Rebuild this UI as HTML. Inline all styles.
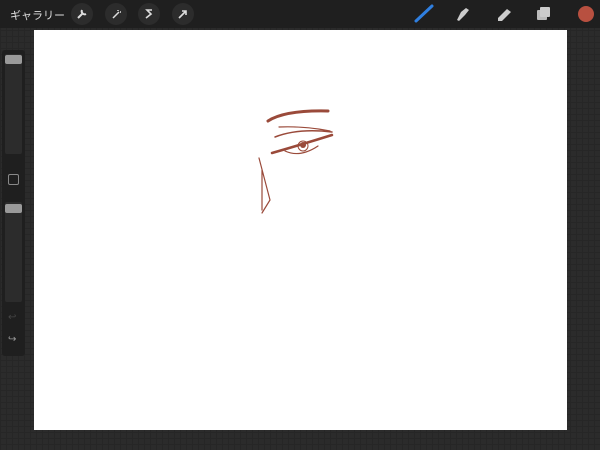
<!DOCTYPE html><html><head><style>
body{margin:0;width:600px;height:450px;overflow:hidden;background:#2b2b2b;position:relative;font-family:"Liberation Sans","Noto Sans CJK JP",sans-serif;
background-image:linear-gradient(#262626 1px,transparent 1px),linear-gradient(90deg,#262626 1px,transparent 1px);background-size:6px 6px;}
.top{position:absolute;left:0;top:0;width:600px;height:28px;background:#1f1f1f;}
.g{position:absolute;left:10px;top:7px;color:#ddd;font-size:11px;}
.ic{position:absolute;top:3px;width:22px;height:22px;border-radius:50%;background:#2c2c2c;}
.canvas{position:absolute;left:34px;top:30px;width:533px;height:400px;background:#fff;}
.side{position:absolute;left:2px;top:50px;width:23px;height:306px;background:#1f1f1f;border-radius:3px;}
.sl{position:absolute;left:3px;width:17px;background:#2c2c2c;border-radius:2px;}
.h{position:absolute;left:0;width:17px;height:9px;background:#9a9a9a;border-radius:2px;}
</style></head><body>
<div class="top"></div>
<div class="g">ギャラリー</div>
<div class="ic" style="left:71px"><svg width="22" height="22"><path d="M7 15l5-5M11 7a3 3 0 0 0 4 4" stroke="#ddd" stroke-width="2" fill="none"/></svg></div>
<div class="ic" style="left:105px"><svg width="22" height="22"><path d="M8 15l6-6M13 7v1M15 9h1" stroke="#ddd" stroke-width="1.5" fill="none"/></svg></div>
<div class="ic" style="left:138px"><svg width="22" height="22"><path d="M14 7H9l4 4-5 4" stroke="#ddd" stroke-width="1.6" fill="none"/></svg></div>
<div class="ic" style="left:172px"><svg width="22" height="22"><path d="M7 15l7-7M10 8h4v4" stroke="#ddd" stroke-width="1.6" fill="none"/></svg></div>
<svg style="position:absolute;left:410px;top:2px" width="190" height="24">
<path d="M6 19L22 4" stroke="#2f7fe0" stroke-width="3" stroke-linecap="round"/>
<path d="M47 18l4-8 5-4 3 2-4 5-6 6z" fill="#ccc"/>
<path d="M88 16l9-9 4 3-9 9h-4z" fill="#ccc"/>
<rect x="127" y="8" width="10" height="10" fill="#bbb" rx="1"/><rect x="130" y="5" width="10" height="10" fill="#ccc" rx="1"/>
<circle cx="176" cy="12" r="8" fill="#b85040"/>
</svg>
<div class="canvas"></div>
<div class="side">
<div class="sl" style="top:4px;height:100px"><div class="h" style="top:1px"></div></div>
<div style="position:absolute;left:6px;top:124px;width:9px;height:9px;border:1px solid #888;border-radius:2px"></div>
<div class="sl" style="top:152px;height:100px"><div class="h" style="top:2px"></div></div>
<div style="position:absolute;left:6px;top:262px;color:#444;font-size:10px">↩</div>
<div style="position:absolute;left:6px;top:284px;color:#999;font-size:10px">↪</div>
</div>
<svg style="position:absolute;left:0;top:0" width="600" height="450" fill="none" stroke="#9a4a3a" stroke-linecap="round">
<path d="M268 121Q285 110 328 111" stroke-width="3"/>
<path d="M279 127Q305 126 330 131" stroke-width="1.2"/>
<path d="M275 137Q298 128 332 132" stroke-width="1.5"/>
<path d="M272 153Q300 145 332 135" stroke-width="2.5"/>
<path d="M285 151Q300 158 318 146" stroke-width="1.2"/>
<circle cx="303" cy="146" r="5" stroke-width="1"/>
<circle cx="303" cy="145" r="3" fill="#9a4a3a" stroke="none"/>
<path d="M259 158L270 200L262 213M262 170L262 210" stroke-width="1.2"/>
</svg>
</body></html>
